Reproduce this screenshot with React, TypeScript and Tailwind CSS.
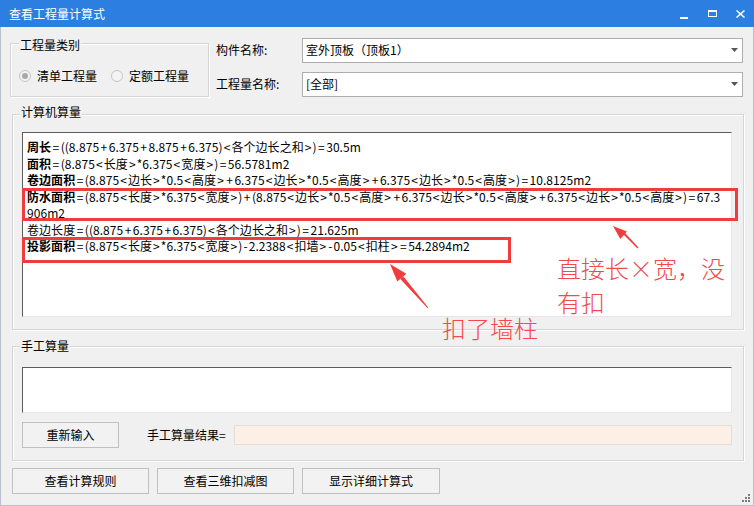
import React from "react";

const font = "font-['Noto_Sans_CJK_SC','Microsoft_YaHei',sans-serif]";

type Line = { label: string; bold?: boolean; rest: string };

const formulaLines: Line[] = [
  { label: "周长", bold: true, rest: "=((8.875+6.375+8.875+6.375)<各个边长之和>)=30.5m" },
  { label: "面积", bold: true, rest: "=(8.875<长度>*6.375<宽度>)=56.5781m2" },
  {
    label: "卷边面积",
    bold: true,
    rest: "=(8.875<边长>*0.5<高度>+6.375<边长>*0.5<高度>+6.375<边长>*0.5<高度>)=10.8125m2",
  },
  {
    label: "防水面积",
    bold: true,
    rest: "=(8.875<长度>*6.375<宽度>)+(8.875<边长>*0.5<高度>+6.375<边长>*0.5<高度>+6.375<边长>*0.5<高度>)=67.3",
  },
  { label: "", rest: "906m2" },
  { label: "卷边长度", rest: "=((8.875+6.375+6.375)<各个边长之和>)=21.625m" },
  { label: "投影面积", bold: true, rest: "=(8.875<长度>*6.375<宽度>)-2.2388<扣墙>-0.05<扣柱>=54.2894m2" },
];

// the dialog font draws = + - < > with side bearings, so pad them a little
function Formula({ text }: { text: string }) {
  const parts = text.split(/([=+<>-])/);
  return (
    <>
      {parts.map((p, i) => {
        if (p === "<" || p === ">" || p === "-") return <span key={i} className="px-[1px]">{p}</span>;
        if (p === "=" || p === "+") return <span key={i} className="px-[1.4px]">{p}</span>;
        return p;
      })}
    </>
  );
}

function Combo({ value }: { value: string }) {
  return (
    <div className="h-[25px] border border-[#adadad] bg-white flex items-center justify-between pl-[3px] pr-[4px]">
      <span>{value}</span>
      <svg width="7" height="4" viewBox="0 0 7 4">
        <path d="M0 0h7L3.5 4z" fill="#555" />
      </svg>
    </div>
  );
}

function Radio({ checked }: { checked?: boolean }) {
  return (
    <span className="w-[12px] h-[12px] rounded-full border border-[#c4c4c4] bg-[#f4f4f4] flex items-center justify-center">
      {checked && <span className="w-[6px] h-[6px] rounded-full bg-[#a8a8a8]" />}
    </span>
  );
}

function Btn({ children, className }: { children: React.ReactNode; className?: string }) {
  return (
    <div className={`h-[26px] border border-[#c0c0c0] bg-[#f2f2f2] flex items-center justify-center ${className ?? ""}`}>
      {children}
    </div>
  );
}

function Annotations() {
  return (
    <div className="absolute inset-0 pointer-events-none">
      {/* red boxes */}
      <div className="absolute left-[22px] top-[188px] w-[716px] h-[33px] border-[3px] border-[#f03c3c]" />
      <div className="absolute left-[22px] top-[237px] w-[489px] h-[26px] border-[3px] border-[#f03c3c]" />

      <svg className="absolute inset-0" width="754" height="506">
        <polygon points="613,226 626.9,231.5 620.3,239.1" fill="#f03c3c" />
        <polygon points="623,234 624.6,232.4 638.5,247.6 637.5,248.4" fill="#f03c3c" />
        <polygon points="390,264 406.3,273.7 397.3,281.5" fill="#f03c3c" />
        <polygon points="400.3,278.9 403.3,276.3 428.4,307.7 427.6,308.3" fill="#f03c3c" />
      </svg>

      <div className="absolute left-[557px] top-[251px] text-[24px] leading-[34px] font-light text-[#f24a4a] whitespace-nowrap">
        直接长×宽，没
        <br />
        有扣
      </div>
      <div className="absolute left-[442px] top-[311px] text-[24px] leading-[34px] font-light text-[#f24a4a] whitespace-nowrap">
        扣了墙柱
      </div>
    </div>
  );
}

export default function App() {
  return (
    <div className={`relative w-[754px] h-[506px] overflow-hidden bg-[#f0f0f0] flex flex-col text-[12px] text-black ${font}`}>
      {/* title bar */}
      <div className="h-[27px] shrink-0 bg-[#2c7fe0] flex items-center text-white">
        <span className="pl-[9px] text-[12px]">查看工程量计算式</span>
        <div className="ml-auto flex items-center">
          <svg width="8" height="8" viewBox="0 0 8 8" className="mr-[20px] mt-[2px]">
            <rect x="0" y="6" width="8" height="2" fill="#fff" />
          </svg>
          <svg width="9" height="7" viewBox="0 0 9 7" className="mr-[19px]">
            <rect x="0.5" y="0.5" width="8" height="6" fill="none" stroke="#fff" />
            <rect x="0" y="0" width="9" height="2" fill="#fff" />
          </svg>
          <svg width="9" height="8" viewBox="0 0 9 8" className="mr-[9px]">
            <path d="M0.5 0.5L8.5 7.5M8.5 0.5L0.5 7.5" stroke="#fff" strokeWidth="1.5" />
          </svg>
        </div>
      </div>

      <div className="flex-1 border-x border-b border-[#b8c2ce] flex flex-col">
        {/* top row */}
        <div className="flex mt-[10px]">
          <div className="relative ml-[9px] mt-[6px] w-[199px] h-[54px] border border-[#d5d5d5] shadow-[inset_1px_1px_0_#fff,1px_1px_0_#fff]">
            <span className="absolute -top-[7px] left-[8px] px-[1px] bg-[#f0f0f0] leading-[16px]">工程量类别</span>
            <div className="flex items-center h-[16px] mt-[24px] pl-[8px]">
              <Radio checked />
              <span className="ml-[6px]">清单工程量</span>
              <span className="ml-[14px]">
                <Radio />
              </span>
              <span className="ml-[6px]">定额工程量</span>
            </div>
          </div>
          <div className="ml-[7px] grid grid-cols-[86px_441px] gap-y-[8px] items-center">
            <span>构件名称:</span>
            <Combo value="室外顶板（顶板1）" />
            <span>工程量名称:</span>
            <Combo value="[全部]" />
          </div>
        </div>

        {/* computer quantities */}
        <div className="relative mt-[17px] ml-[11px] w-[732px] h-[216px] border border-[#d5d5d5] shadow-[inset_1px_1px_0_#fff,1px_1px_0_#fff]">
          <span className="absolute -top-[11px] left-[7px] px-[1px] bg-[#f0f0f0] leading-[16px]">计算机算量</span>
          <div className="mt-[17px] ml-[9px] w-[710px] h-[185px] bg-white border border-t-[#5c5c5c] border-l-[#5c5c5c] border-r-[#e6e6e6] border-b-[#e6e6e6] pl-[4px] pt-[6px] leading-[16.5px] tracking-[0.06px] whitespace-pre overflow-hidden">
            {formulaLines.map((l, i) => (
              <div key={i}>
                {l.label && <span className={l.bold ? "font-bold" : ""}>{l.label}</span>}
                <Formula text={l.rest} />
              </div>
            ))}
          </div>
        </div>

        {/* manual quantities */}
        <div className="relative mt-[16px] ml-[11px] w-[732px] h-[115px] border border-[#d5d5d5] shadow-[inset_1px_1px_0_#fff,1px_1px_0_#fff]">
          <span className="absolute -top-[9px] left-[7px] px-[1px] bg-[#f0f0f0] leading-[16px]">手工算量</span>
          <div className="mt-[20px] ml-[9px] w-[710px] h-[46px] bg-white border border-t-[#5c5c5c] border-l-[#5c5c5c] border-r-[#e6e6e6] border-b-[#e6e6e6]" />
          <div className="flex items-center mt-[9px] ml-[9px]">
            <Btn className="w-[97px]">重新输入</Btn>
            <span className="ml-[28px]">手工算量结果=</span>
            <div className="ml-[8px] w-[498px] h-[20px] bg-[#fbefe6] border border-[#e6ddd4]" />
          </div>
        </div>

        {/* bottom buttons */}
        <div className="flex gap-[8px] mt-[7px] ml-[11px]">
          <Btn className="w-[137px]">查看计算规则</Btn>
          <Btn className="w-[137px]">查看三维扣减图</Btn>
          <Btn className="w-[138px]">显示详细计算式</Btn>
        </div>
      </div>

      {/* resize grip */}
      <svg className="absolute right-[4px] bottom-[4px]" width="8" height="8" viewBox="0 0 8 8">
        <g fill="#7d7d7d">
          <rect x="6" y="0" width="2" height="2" />
          <rect x="3" y="3" width="2" height="2" />
          <rect x="6" y="3" width="2" height="2" />
          <rect x="0" y="6" width="2" height="2" />
          <rect x="3" y="6" width="2" height="2" />
          <rect x="6" y="6" width="2" height="2" />
        </g>
      </svg>

      <Annotations />
    </div>
  );
}
